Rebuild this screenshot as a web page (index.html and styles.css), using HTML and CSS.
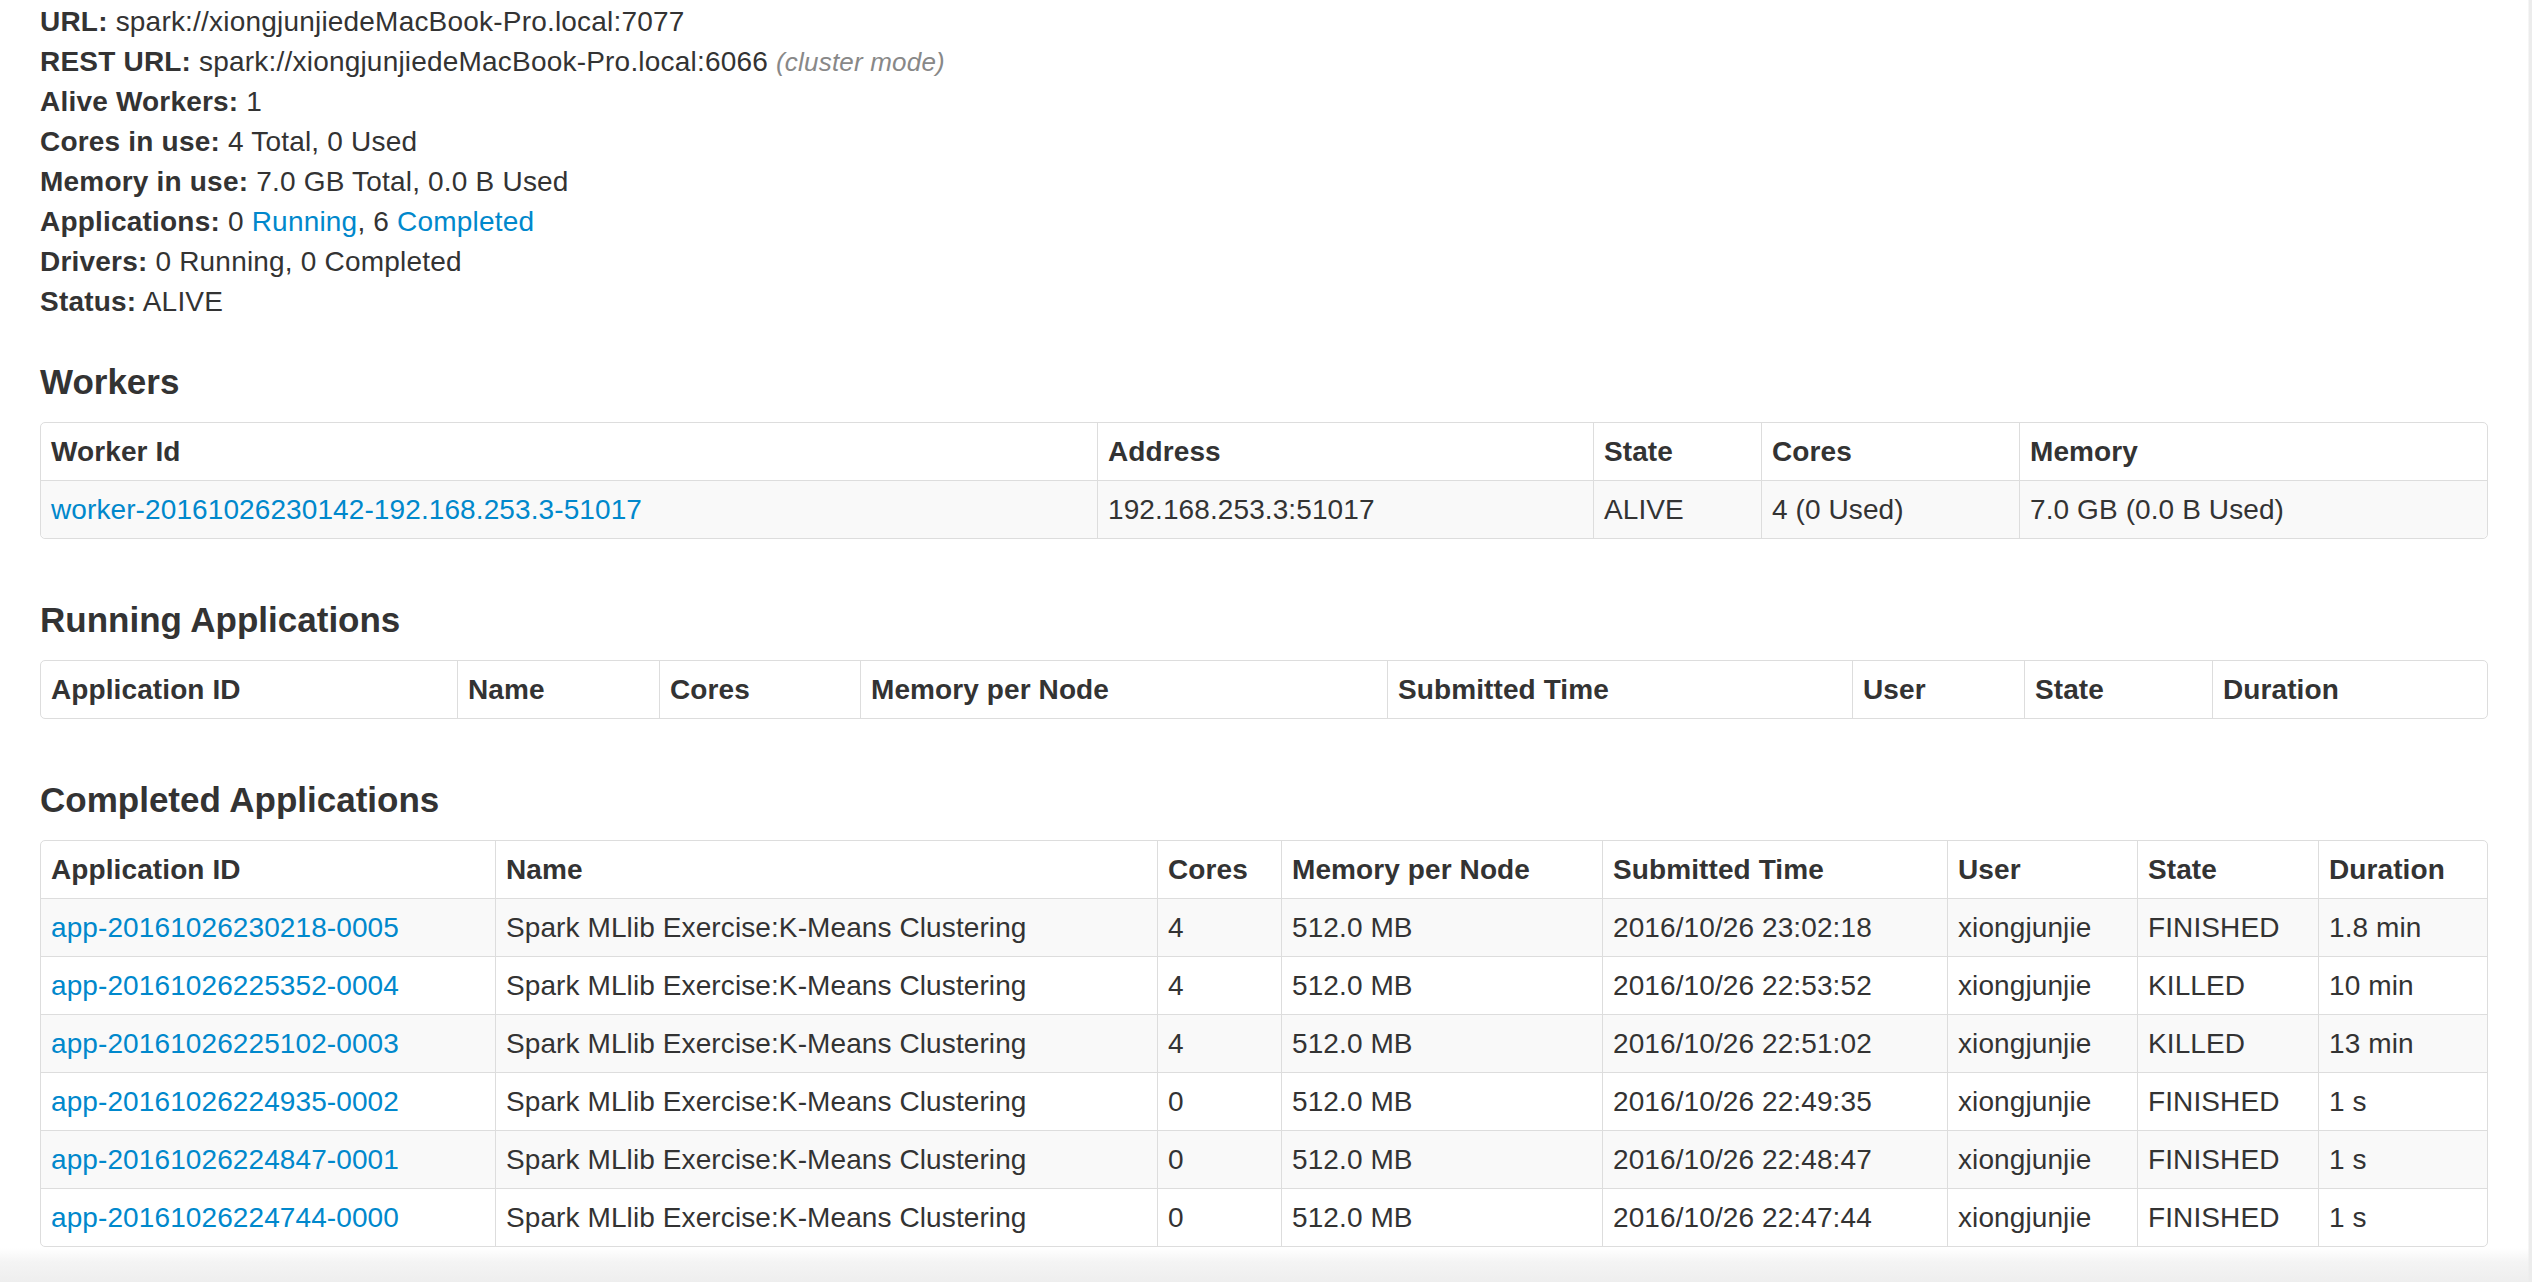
FILE: index.html
```html
<!DOCTYPE html>
<html>
<head>
<meta charset="utf-8">
<title>Spark Master</title>
<link rel="stylesheet" href="styles.css">
</head>
<body>
<div class="container">
  <ul class="summary">
    <li><strong>URL:</strong> spark://xiongjunjiedeMacBook-Pro.local:7077</li>
    <li><strong>REST URL:</strong> spark://xiongjunjiedeMacBook-Pro.local:6066 <span class="rest-uri">(cluster mode)</span></li>
    <li><strong>Alive Workers:</strong> 1</li>
    <li><strong>Cores in use:</strong> 4 Total, 0 Used</li>
    <li><strong>Memory in use:</strong> 7.0 GB Total, 0.0 B Used</li>
    <li><strong>Applications:</strong> 0 <a href="#running-app">Running</a>, 6 <a href="#completed-app">Completed</a></li>
    <li><strong>Drivers:</strong> 0 Running, 0 Completed</li>
    <li><strong>Status:</strong> ALIVE</li>
  </ul>

  <section class="section">
    <h4>Workers</h4>
    <table class="grid workers">
      <thead>
        <tr><th>Worker Id</th><th>Address</th><th>State</th><th>Cores</th><th>Memory</th></tr>
      </thead>
      <tbody>
        <tr><td><a href="#">worker-20161026230142-192.168.253.3-51017</a></td><td>192.168.253.3:51017</td><td>ALIVE</td><td>4 (0 Used)</td><td>7.0 GB (0.0 B Used)</td></tr>
      </tbody>
    </table>
  </section>

  <section class="section" id="running-app">
    <h4>Running Applications</h4>
    <table class="grid running">
      <thead>
        <tr><th>Application ID</th><th>Name</th><th>Cores</th><th>Memory per Node</th><th>Submitted Time</th><th>User</th><th>State</th><th>Duration</th></tr>
      </thead>
      <tbody></tbody>
    </table>
  </section>

  <section class="section" id="completed-app">
    <h4>Completed Applications</h4>
    <table class="grid completed">
      <thead>
        <tr><th>Application ID</th><th>Name</th><th>Cores</th><th>Memory per Node</th><th>Submitted Time</th><th>User</th><th>State</th><th>Duration</th></tr>
      </thead>
      <tbody>
        <tr><td><a href="#">app-20161026230218-0005</a></td><td>Spark MLlib Exercise:K-Means Clustering</td><td>4</td><td>512.0 MB</td><td>2016/10/26 23:02:18</td><td>xiongjunjie</td><td>FINISHED</td><td>1.8 min</td></tr>
        <tr><td><a href="#">app-20161026225352-0004</a></td><td>Spark MLlib Exercise:K-Means Clustering</td><td>4</td><td>512.0 MB</td><td>2016/10/26 22:53:52</td><td>xiongjunjie</td><td>KILLED</td><td>10 min</td></tr>
        <tr><td><a href="#">app-20161026225102-0003</a></td><td>Spark MLlib Exercise:K-Means Clustering</td><td>4</td><td>512.0 MB</td><td>2016/10/26 22:51:02</td><td>xiongjunjie</td><td>KILLED</td><td>13 min</td></tr>
        <tr><td><a href="#">app-20161026224935-0002</a></td><td>Spark MLlib Exercise:K-Means Clustering</td><td>0</td><td>512.0 MB</td><td>2016/10/26 22:49:35</td><td>xiongjunjie</td><td>FINISHED</td><td>1 s</td></tr>
        <tr><td><a href="#">app-20161026224847-0001</a></td><td>Spark MLlib Exercise:K-Means Clustering</td><td>0</td><td>512.0 MB</td><td>2016/10/26 22:48:47</td><td>xiongjunjie</td><td>FINISHED</td><td>1 s</td></tr>
        <tr><td><a href="#">app-20161026224744-0000</a></td><td>Spark MLlib Exercise:K-Means Clustering</td><td>0</td><td>512.0 MB</td><td>2016/10/26 22:47:44</td><td>xiongjunjie</td><td>FINISHED</td><td>1 s</td></tr>
      </tbody>
    </table>
  </section>
</div>
</body>
</html>
```

FILE: styles.css
```css
html {
  background:
    linear-gradient(to right, rgba(0,0,0,0) 2528px, #ececec 2529px),
    linear-gradient(to bottom, #ffffff 0, #ffffff 1248px, #f4f4f4 1262px, #eeeeee 1282px);
  background-repeat: no-repeat;
  min-height: 1282px;
}

body {
  margin: 0;
  font-family: "Liberation Sans", Arial, Helvetica, sans-serif;
  font-size: 28px;
  line-height: 40px;
  letter-spacing: 0.2px;
  color: #333333;
}

a {
  color: #0088cc;
  text-decoration: none;
}

strong {
  font-weight: bold;
}

.container {
  width: 2448px;
  padding: 2px 44px 0 40px;
}

.summary {
  list-style: none;
  margin: 0 0 40px 0;
  padding: 0;
}

.rest-uri {
  font-style: italic;
  color: #888888;
  font-size: 26px;
}

.section + .section {
  margin-top: 61px;
}

h4 {
  margin: 0 0 20px 0;
  font-size: 35px;
  line-height: 40px;
  font-weight: bold;
  letter-spacing: 0;
  color: #333333;
}

.grid {
  width: 2448px;
  table-layout: fixed;
  border-collapse: separate;
  border-spacing: 0;
  border: 1px solid #dddddd;
  border-radius: 5px;
  letter-spacing: 0.1px;
}

.grid th,
.grid td {
  box-sizing: border-box;
  padding: 8px 10px;
  line-height: 41px;
  text-align: left;
  vertical-align: top;
  border-left: 1px solid #dddddd;
  border-top: 1px solid #dddddd;
  white-space: nowrap;
  overflow: hidden;
}

.grid th {
  font-weight: bold;
  border-top: 0;
}

.grid th:first-child,
.grid td:first-child {
  border-left: 0;
}

.grid tbody tr:nth-child(odd) td {
  background-color: #f9f9f9;
}

.grid tbody tr:last-child td:first-child {
  border-bottom-left-radius: 5px;
}

.grid tbody tr:last-child td:last-child {
  border-bottom-right-radius: 5px;
}

/* Workers column widths */
.workers th:nth-child(1) { width: 1056px; }
.workers th:nth-child(2) { width: 496px; }
.workers th:nth-child(3) { width: 168px; }
.workers th:nth-child(4) { width: 258px; }

/* Running applications column widths */
.running th:nth-child(1) { width: 416px; }
.running th:nth-child(2) { width: 202px; }
.running th:nth-child(3) { width: 201px; }
.running th:nth-child(4) { width: 527px; }
.running th:nth-child(5) { width: 465px; }
.running th:nth-child(6) { width: 172px; }
.running th:nth-child(7) { width: 188px; }

/* Completed applications column widths */
.completed th:nth-child(1) { width: 454px; }
.completed th:nth-child(2) { width: 662px; }
.completed th:nth-child(3) { width: 124px; }
.completed th:nth-child(4) { width: 321px; }
.completed th:nth-child(5) { width: 345px; }
.completed th:nth-child(6) { width: 190px; }
.completed th:nth-child(7) { width: 181px; }
```
